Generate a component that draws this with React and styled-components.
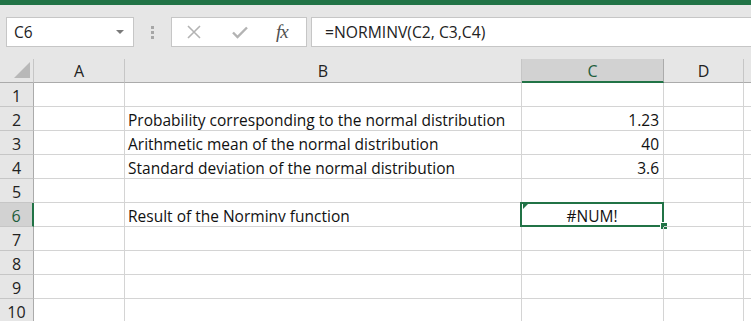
import React from "react";
import styled, { createGlobalStyle } from "styled-components";

const GREEN = "#217346";
const FONT = `"Open Sans", "Noto Sans", "Liberation Sans", sans-serif`;

const GlobalStyle = createGlobalStyle`
  html, body { margin: 0; padding: 0; background: #ffffff; overflow: hidden; }
  * { box-sizing: border-box; }
`;

const Page = styled.div`
  width: 751px;
  height: 321px;
  font-family: ${FONT};
  background: #e6e6e6;
  overflow: hidden;
`;

const TitleStrip = styled.div`
  height: 5px;
  background: ${GREEN};
`;

const Toolbar = styled.div`
  display: flex;
  align-items: flex-start;
  height: 54px;
  padding: 12px 0 0 6px;
`;

const NameBox = styled.div`
  width: 128px;
  height: 30px;
  background: #fff;
  border: 1px solid #c6c6c6;
  display: flex;
  align-items: center;
  justify-content: space-between;
  padding: 0 9px 0 7px;
  font-size: 15.5px;
  color: #222;
`;

const Caret = styled.span`
  width: 0;
  height: 0;
  border-left: 4px solid transparent;
  border-right: 4px solid transparent;
  border-top: 4px solid #7a7a7a;
`;

const Grip = styled.div`
  width: 37px;
  height: 30px;
  display: flex;
  flex-direction: column;
  align-items: center;
  justify-content: center;
  gap: 2px;
`;

const GripDot = styled.span`
  width: 3px;
  height: 3px;
  background: #a6a6a6;
`;

const ButtonBox = styled.div`
  width: 136px;
  height: 30px;
  background: #fff;
  border: 1px solid #c6c6c6;
  display: flex;
  align-items: center;
  padding-left: 15px;
`;

const IconSlot = styled.span`
  width: ${(p) => p.$w}px;
  display: flex;
  align-items: center;
`;

const Fx = styled.span`
  font-family: "Liberation Serif", "DejaVu Serif", serif;
  font-style: italic;
  font-size: 19px;
  color: #505050;
  letter-spacing: -1px;
`;

const FormulaBox = styled.div`
  flex: 1;
  height: 30px;
  margin-left: 4px;
  margin-right: -2px;
  background: #fff;
  border: 1px solid #c6c6c6;
  display: flex;
  align-items: center;
  padding-left: 13px;
  font-size: 15.7px;
  color: #222;
`;

const Sheet = styled.div`
  display: grid;
  grid-template-columns: 34px 91px 397px 142px 80px 1fr;
  grid-auto-rows: 24px;
  background: #fff;
`;

const Corner = styled.div`
  position: relative;
  background: #e6e6e6;
  border-right: 1px solid #c6c6c6;
  border-bottom: 1px solid #ababab;
`;

const CornerTriangle = styled.span`
  position: absolute;
  right: 3px;
  bottom: 4px;
  width: 0;
  height: 0;
  border-left: 16px solid transparent;
  border-bottom: 16px solid #b8b8b8;
`;

const ColHeader = styled.div`
  background: ${(p) => (p.$active ? "#d2d2d2" : "#e6e6e6")};
  border-right: 1px solid ${(p) => (p.$active ? "#ababab" : "#c6c6c6")};
  border-bottom: ${(p) => (p.$active ? `2px solid ${GREEN}` : "1px solid #ababab")};
  display: flex;
  align-items: center;
  justify-content: center;
  padding-top: ${(p) => (p.$active ? "1px" : "0")};
  font-size: 16px;
  color: ${(p) => (p.$active ? "#1e5e3c" : "#222")};
`;

const RowHeader = styled.div`
  background: ${(p) => (p.$active ? "#d2d2d2" : "#e6e6e6")};
  border-right: ${(p) => (p.$active ? `2px solid ${GREEN}` : "1px solid #ababab")};
  border-bottom: 1px solid #c6c6c6;
  display: flex;
  align-items: center;
  justify-content: center;
  padding-top: 2px;
  font-size: 16px;
  color: ${(p) => (p.$active ? "#1e5e3c" : "#222")};
`;

const Cell = styled.div`
  position: relative;
  border-right: 1px solid #d4d4d4;
  border-bottom: 1px solid #d4d4d4;
  display: flex;
  align-items: center;
  justify-content: ${(p) => (p.$align === "right" ? "flex-end" : p.$align === "center" ? "center" : "flex-start")};
  padding: 3px 4px 0 3px;
  font-size: 15.5px;
  color: #111;
  white-space: nowrap;
`;

const SelectionFrame = styled.span`
  position: absolute;
  left: -2px;
  top: -1px;
  right: -1px;
  bottom: -1px;
  border: 2px solid ${GREEN};
  pointer-events: none;
`;

const FillHandle = styled.span`
  position: absolute;
  right: -4px;
  bottom: -3px;
  width: 6px;
  height: 6px;
  background: ${GREEN};
  outline: 1px solid #fff;
`;

const ErrorFlag = styled.span`
  position: absolute;
  left: 1px;
  top: 1px;
  width: 0;
  height: 0;
  border-top: 5px solid ${GREEN};
  border-right: 5px solid transparent;
`;

const columns = ["A", "B", "C", "D", ""];

const data = {
  2: { B: "Probability corresponding to the normal distribution", C: "1.23" },
  3: { B: "Arithmetic mean of the normal distribution", C: "40" },
  4: { B: "Standard deviation of the normal distribution", C: "3.6" },
  6: { B: "Result of the Norminv function", C: "#NUM!" },
};

function XIcon() {
  return (
    <svg width="14" height="14" viewBox="0 0 14 14">
      <path d="M1 1 L13 13 M13 1 L1 13" stroke="#b3b3b3" strokeWidth="1.6" fill="none" />
    </svg>
  );
}

function CheckIcon() {
  return (
    <svg width="16" height="13" viewBox="0 0 16 13">
      <path d="M1 6.5 L5.5 11 L15 1.5" stroke="#b3b3b3" strokeWidth="2.4" fill="none" />
    </svg>
  );
}

export default function App() {
  return (
    <Page>
      <GlobalStyle />
      <TitleStrip />
      <Toolbar>
        <NameBox>
          C6
          <Caret />
        </NameBox>
        <Grip>
          <GripDot />
          <GripDot />
          <GripDot />
        </Grip>
        <ButtonBox>
          <IconSlot $w={45}>
            <XIcon />
          </IconSlot>
          <IconSlot $w={44}>
            <CheckIcon />
          </IconSlot>
          <IconSlot $w={30}>
            <Fx>fx</Fx>
          </IconSlot>
        </ButtonBox>
        <FormulaBox>=NORMINV(C2, C3,C4)</FormulaBox>
      </Toolbar>
      <Sheet>
        <Corner>
          <CornerTriangle />
        </Corner>
        {columns.map((c, i) => (
          <ColHeader key={i} $active={c === "C"}>
            {c}
          </ColHeader>
        ))}
        {Array.from({ length: 10 }, (_, r) => {
          const row = r + 1;
          const rd = data[row] || {};
          const active = row === 6;
          return (
            <React.Fragment key={row}>
              <RowHeader $active={active}>{row}</RowHeader>
              <Cell />
              <Cell>{rd.B}</Cell>
              <Cell $align={active ? "center" : "right"}>
                {rd.C}
                {active && (
                  <>
                    <ErrorFlag />
                    <SelectionFrame />
                    <FillHandle />
                  </>
                )}
              </Cell>
              <Cell />
              <Cell />
            </React.Fragment>
          );
        })}
      </Sheet>
    </Page>
  );
}
